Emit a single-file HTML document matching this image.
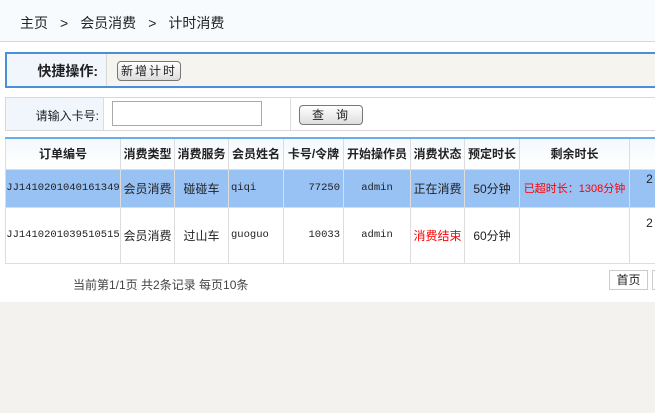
<!DOCTYPE html>
<html><head><meta charset="utf-8"><style>
*{margin:0;padding:0;box-sizing:border-box}
body{width:655px;height:413px;overflow:hidden;background:#f3f2ef;font-family:"Liberation Sans","Noto Sans CJK SC","WenQuanYi Zen Hei",sans-serif;font-size:12px;color:#222;position:relative}
.a{position:absolute}
.top{left:0;top:0;width:655px;height:302px;background:#fff}
.bc{left:0;top:0;width:655px;height:42px;background:#f7fbfe;border-bottom:1px solid #d8d8d8;font-size:14px;padding:13px 0 0 20px;color:#222}
.bc span{margin:0 12px}
.quick{left:5px;top:52px;width:660px;height:36px;border:2px solid #4a90d8;border-right:none;background:#f6f4ee}
.ql{left:0;top:0;width:100px;height:32px;background:#f0f6fc;border-right:1px solid #d8d8d8;font-weight:bold;font-size:14px;text-align:right;padding:7px 8px 0 0}
.btn{border:1px solid #777;border-radius:4px;background:linear-gradient(#fff,#ddd);font-size:12px;text-align:center;letter-spacing:2px}
.srch{left:5px;top:97px;width:660px;height:34px;border:1px solid #d8d8d8;border-right:none}
table{position:absolute;left:5px;top:137px;border-collapse:collapse;table-layout:fixed;width:664px}
td,th{border:1px solid #ddd;text-align:center;font-size:12px;white-space:nowrap;overflow:hidden;padding:0}
th{height:31px;font-weight:bold;background:linear-gradient(#f4f9fe,#fff);border-top:2px solid #6aaee8}
tr.r1 td{height:38px;background:#98c1f4}
tr.r2 td{height:56px;background:#fff}
.m{font-family:"Liberation Mono","DejaVu Sans Mono",monospace;font-size:10.5px}
.red{color:#f00}
</style></head><body>
<div class="a top"></div>
<div class="a bc">主页<span>&gt;</span>会员消费<span>&gt;</span>计时消费</div>
<div class="a quick"><div class="a ql">快捷操作:</div>
<div class="a btn" style="left:110px;top:7px;width:64px;height:20px;line-height:18px">新增计时</div></div>
<div class="a srch">
<div class="a" style="left:0;top:0;width:98px;height:32px;background:#f0f6fc;border-right:1px solid #ddd;text-align:right;padding:9px 4px 0 0">请输入卡号:</div>
<div class="a" style="left:106px;top:3px;width:150px;height:25px;border:1px solid #aaa;background:#fff"></div>
<div class="a" style="left:284px;top:0;width:1px;height:32px;background:#ddd"></div>
<div class="a btn" style="left:293px;top:7px;width:64px;height:20px;line-height:18px;letter-spacing:12px;padding-left:10px">查询</div>
</div>
<table>
<colgroup><col style="width:115px"><col style="width:54px"><col style="width:54px"><col style="width:55px"><col style="width:60px"><col style="width:67px"><col style="width:54px"><col style="width:55px"><col style="width:110px"><col style="width:40px"></colgroup>
<tr><th>订单编号</th><th>消费类型</th><th>消费服务</th><th>会员姓名</th><th>卡号/令牌</th><th>开始操作员</th><th>消费状态</th><th>预定时长</th><th>剩余时长</th><th></th></tr>
<tr class="r1"><td class="m">JJ1410201040161349</td><td>会员消费</td><td>碰碰车</td><td class="m" style="text-align:left;padding-left:2px">qiqi</td><td class="m" style="text-align:right;padding-right:3px">77250</td><td class="m">admin</td><td>正在消费</td><td>50分钟</td><td class="red" style="font-size:11px">已超时长：1308分钟</td><td style="vertical-align:top;padding-top:2px">2</td></tr>
<tr class="r2"><td class="m">JJ1410201039510515</td><td>会员消费</td><td>过山车</td><td class="m" style="text-align:left;padding-left:2px">guoguo</td><td class="m" style="text-align:right;padding-right:3px">10033</td><td class="m">admin</td><td class="red">消费结束</td><td>60分钟</td><td></td><td style="vertical-align:top;padding-top:8px">2</td></tr>
</table>
<div class="a" style="left:73px;top:276px;font-size:12px;color:#444">当前第1/1页 共2条记录 每页10条</div>
<div class="a" style="left:609px;top:270px;width:39px;height:20px;border:1px solid #ccc;text-align:center;line-height:18px;background:#fff">首页</div>
<div class="a" style="left:652px;top:270px;width:10px;height:20px;border:1px solid #ccc;background:#fff"></div>
</body></html>
